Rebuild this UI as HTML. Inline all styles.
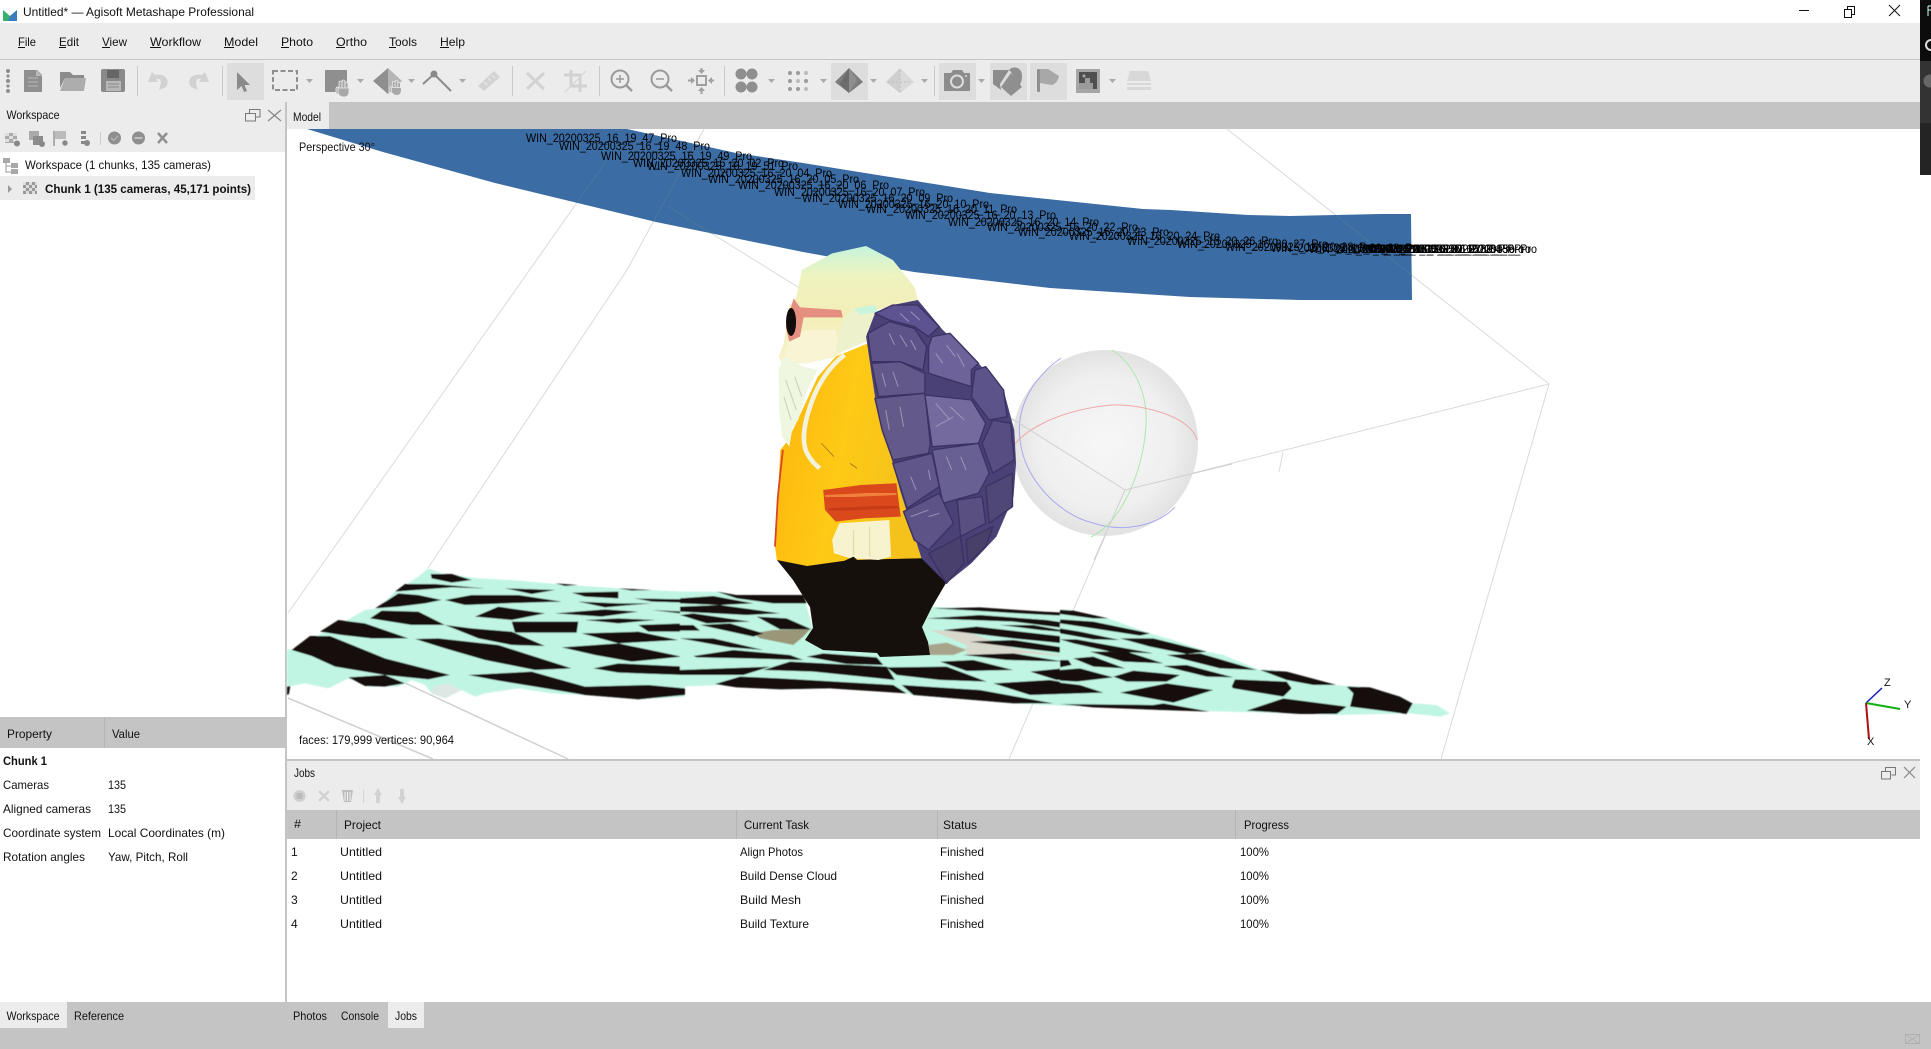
<!DOCTYPE html>
<html><head><meta charset="utf-8"><title>Untitled* — Agisoft Metashape Professional</title>
<style>
html,body{margin:0;padding:0;background:#fff;width:1931px;height:1049px;overflow:hidden}
svg{display:block}
text{font-family:"Liberation Sans",sans-serif;font-size:12px;fill:#111}
.b{font-weight:bold}
.l{font-size:11.5px;fill:#000}
</style></head><body>
<svg xmlns="http://www.w3.org/2000/svg" width="1931" height="1049" viewBox="0 0 1931 1049">
<defs>
<radialGradient id="sph" cx="50%" cy="50%" r="52%"><stop offset="0" stop-color="#f7f7f7"/><stop offset=".7" stop-color="#efefef"/><stop offset="1" stop-color="#e0e0e0"/></radialGradient>
<linearGradient id="head" x1="0" y1="0" x2="0" y2="1"><stop offset="0" stop-color="#c5f5dc"/><stop offset=".25" stop-color="#eef3c0"/><stop offset=".6" stop-color="#f4eeb8"/><stop offset="1" stop-color="#f6f2cc"/></linearGradient>
<linearGradient id="body" x1="0" y1="0" x2="1" y2=".3"><stop offset="0" stop-color="#ffb30c"/><stop offset=".55" stop-color="#fdca16"/><stop offset="1" stop-color="#f5c21c"/></linearGradient>
<clipPath id="band"><polygon points="307,129 627,129 736,153 803,163 990,193 1143,209 1171,210 1248,215 1290,216 1380,214 1411,214 1412,300 1300,300 1190,297 1050,288 914,272 803,252 656,222 495,183 383,152"/></clipPath>
<filter id="soft" x="-5%" y="-5%" width="110%" height="110%"><feGaussianBlur stdDeviation=".7"/></filter>
<filter id="soft2" x="-5%" y="-5%" width="110%" height="110%"><feGaussianBlur stdDeviation=".45"/></filter>
<symbol id="hand" viewBox="0 0 16 18" overflow="visible"><g fill="#a8a8a8" stroke="#ececec" stroke-width=".8"><rect x="1" y="8" width="3" height="7" rx="1.5"/><rect x="4" y="2" width="3" height="10" rx="1.5"/><rect x="7" y="1" width="3" height="10" rx="1.5"/><rect x="10" y="3" width="3" height="10" rx="1.5"/><path d="M3,9H14V13C14,16 12,18 9,18C6,18 4,17 3,14Z"/></g></symbol>
</defs>

<!-- chrome -->
<rect width="1931" height="1049" fill="#fff"/>
<rect x="0" y="23" width="1920" height="79" fill="#ececec"/>
<rect x="0" y="59" width="1920" height="1" fill="#c4c4c4"/>
<rect x="0" y="102" width="285" height="50" fill="#ececec"/>
<rect x="287" y="102" width="1633" height="27" fill="#c4c4c4"/>
<rect x="287" y="102" width="42" height="27" fill="#ececec"/>
<rect x="285" y="102" width="2" height="900" fill="#c4c4c4"/>

<!-- right strip -->
<rect x="1920" y="0" width="11" height="61" fill="#0c0c0c"/>
<rect x="1920" y="61" width="11" height="62" fill="#333"/>
<rect x="1920" y="123" width="11" height="52" fill="#242424"/>
<circle cx="1930" cy="81" r="6.5" fill="#666"/>
<circle cx="1931" cy="45" r="5" fill="none" stroke="#ddd" stroke-width="2"/>
<path d="M1928 6v10M1928 6h3M1928 10h3" stroke="#cfe" stroke-width="1" fill="none"/>

<!-- title bar -->
<path d="M3,10L10,16L17,10V21H3Z" fill="#38b06f"/><path d="M10,16L17,10V21H8Z" fill="#3b7cc0"/>
<text x="23" y="16" textLength="231" lengthAdjust="spacingAndGlyphs">Untitled* — Agisoft Metashape Professional</text>
<path d="M1799,10.5H1809" stroke="#111" stroke-width="1"/>
<path d="M1844.500,9.500h7v8h-7zM1847.500,9V6.500h7v8h-3" fill="none" stroke="#111" stroke-width="1"/>
<path d="M1889,5L1900,16M1900,5L1889,16" stroke="#111" stroke-width="1"/>

<!-- menu -->
<g>
<text x="18" y="46" textLength="18" lengthAdjust="spacingAndGlyphs">File</text>
<text x="59" y="46" textLength="20" lengthAdjust="spacingAndGlyphs">Edit</text>
<text x="102" y="46" textLength="25" lengthAdjust="spacingAndGlyphs">View</text>
<text x="150" y="46" textLength="51" lengthAdjust="spacingAndGlyphs">Workflow</text>
<text x="224" y="46" textLength="34" lengthAdjust="spacingAndGlyphs">Model</text>
<text x="281" y="46" textLength="32" lengthAdjust="spacingAndGlyphs">Photo</text>
<text x="336" y="46" textLength="31" lengthAdjust="spacingAndGlyphs">Ortho</text>
<text x="389" y="46" textLength="28" lengthAdjust="spacingAndGlyphs">Tools</text>
<text x="440" y="46" textLength="25" lengthAdjust="spacingAndGlyphs">Help</text>
<g fill="#111"><rect x="18" y="47" width="7" height="1"/><rect x="59" y="47" width="7" height="1"/><rect x="102" y="47" width="8" height="1"/><rect x="150" y="47" width="11" height="1"/><rect x="224" y="47" width="10" height="1"/><rect x="281" y="47" width="8" height="1"/><rect x="336" y="47" width="9" height="1"/><rect x="389" y="47" width="7" height="1"/><rect x="440" y="47" width="9" height="1"/></g>
</g>

<!-- toolbar -->
<g fill="#8f8f8f">
<circle cx="8" cy="71" r="2"/><circle cx="8" cy="76" r="1.600"/><circle cx="8" cy="81" r="2"/><circle cx="8" cy="86" r="1.600"/><circle cx="8" cy="91" r="2"/>
</g>
<g fill="#c8c8c8"><rect x="137" y="66" width="1" height="30"/><rect x="222" y="66" width="1" height="30"/><rect x="512" y="66" width="1" height="30"/><rect x="599" y="66" width="1" height="30"/><rect x="724" y="66" width="1" height="30"/><rect x="934" y="66" width="1" height="30"/></g>
<g fill="#dddddd"><rect x="227" y="63" width="37" height="37"/><rect x="831" y="63" width="37" height="37"/><rect x="939" y="63" width="37" height="37"/><rect x="990" y="63" width="37" height="37"/><rect x="1030" y="63" width="37" height="37"/></g>
<!-- new -->
<path d="M24,70H37L42,75V92H24Z" fill="#8f8f8f"/><path d="M36,70V76H42" fill="#bbb"/><path d="M28,78H38M28,82H38M28,86H38" stroke="#b8b8b8"/>
<!-- open -->
<path d="M60,72H70L73,75H84V78H65L60,88Z" fill="#8c8c8c"/><path d="M60,91L65,78H86L84,91Z" fill="#adadad"/>
<!-- save -->
<rect x="101" y="69" width="24" height="23" rx="2" fill="#8a8a8a"/><rect x="107" y="70" width="12" height="8" fill="#666"/><rect x="106" y="81" width="15" height="10" fill="#b8b8b8"/><path d="M108,84H119M108,87H119" stroke="#888"/>
<!-- undo redo -->
<path d="M166,87C171,79 164,73 155,75L152,72L148,82L158,82L156,79C160,78 163,80 159,90Z" fill="#d2d2d2"/>
<path d="M191,87C186,79 193,73 202,75L205,72L209,82L199,82L201,79C197,78 194,80 198,90Z" fill="#d2d2d2"/>
<!-- arrow -->
<path d="M237,72L250,85L244.500,85L247,91L244,92L241.500,86L237,90Z" fill="#8a8a8a"/>
<!-- select rect -->
<rect x="273" y="71" width="24" height="19" fill="none" stroke="#8f8f8f" stroke-width="2" stroke-dasharray="5 2.500"/>
<!-- dropdowns -->
<g fill="#aaaaaa"><path d="M306,79h7l-3.500,4z"/><path d="M357,79h7l-3.500,4z"/><path d="M408,79h7l-3.500,4z"/><path d="M459,79h7l-3.500,4z"/><path d="M768,79h7l-3.500,4z"/><path d="M820,79h7l-3.500,4z"/><path d="M870,79h7l-3.500,4z"/><path d="M921,79h7l-3.500,4z"/><path d="M978,79h7l-3.500,4z"/><path d="M1109,79h7l-3.500,4z"/></g>
<!-- hand square -->
<rect x="325" y="70" width="22" height="22" fill="#8f8f8f"/><use href="#hand" x="335" y="79" width="16" height="18"/>
<!-- diamond hand -->
<path d="M373,81L388,68V94Z" fill="#8f8f8f"/><path d="M388,68L402,81L388,94Z" fill="#b5b5b5"/><use href="#hand" x="389" y="79" width="14" height="17"/>
<!-- ruler point -->
<path d="M423,84L434,74L451,91" fill="none" stroke="#8a8a8a" stroke-width="2"/><circle cx="434" cy="74" r="3.500" fill="#8a8a8a"/>
<!-- ruler -->
<path d="M478,86L494,71L500,77L484,91Z" fill="#d2d2d2"/>
<path d="M484,82l3,3M488,78l3,3M492,75l3,3" stroke="#ececec"/>
<!-- X -->
<path d="M527,73L544,89M544,73L527,89" stroke="#d2d2d2" stroke-width="3"/>
<!-- crop -->
<path d="M571,70V86H587M564,75H580V92" fill="none" stroke="#d2d2d2" stroke-width="3"/><path d="M565,92L586,71" stroke="#d2d2d2"/>
<!-- zoom in/out -->
<circle cx="620" cy="79" r="8.500" fill="none" stroke="#9a9a9a" stroke-width="2"/><path d="M626,85L632,91" stroke="#9a9a9a" stroke-width="2.500"/><path d="M616,79h8M620,75v8" stroke="#9a9a9a" stroke-width="1.500"/>
<circle cx="660" cy="79" r="8.500" fill="none" stroke="#9a9a9a" stroke-width="2"/><path d="M666,85L672,91" stroke="#9a9a9a" stroke-width="2.500"/><path d="M656,79h8" stroke="#9a9a9a" stroke-width="1.500"/>
<!-- move -->
<rect x="697" y="76" width="9" height="9" fill="none" stroke="#a0a0a0" stroke-width="2"/>
<g fill="#a0a0a0"><path d="M701.500,74L698,70h2.500v-2h2v2h2.500z"/><path d="M701.500,87L698,91h2.500v3h2v-3h2.500z"/><path d="M695,80.500L691,77v2.500h-3v2h3v2.500z"/><path d="M708,80.500L712,77v2.500h2v2h-2v2.500z"/></g>
<!-- 4 dots -->
<g fill="#8f8f8f"><circle cx="741" cy="74" r="5.500"/><circle cx="752" cy="74" r="5.500"/><circle cx="741" cy="87" r="5.500"/><circle cx="752" cy="87" r="5.500"/></g>
<!-- small dots -->
<g fill="#9a9a9a"><circle cx="790" cy="73" r="2"/><circle cx="798" cy="73" r="2"/><circle cx="806" cy="73" r="2" fill="#bbb"/><circle cx="790" cy="81" r="2"/><circle cx="798" cy="81" r="2" fill="#bbb"/><circle cx="806" cy="81" r="2"/><circle cx="790" cy="89" r="2"/><circle cx="798" cy="89" r="2"/><circle cx="806" cy="89" r="2" fill="#bbb"/></g>
<!-- pyramids -->
<path d="M849,68L863,82L849,93L835,82Z" fill="#7d7d7d"/><path d="M849,68L840,84L849,93Z" fill="#6c6c6c"/><path d="M849,68L857,80L849,93Z" fill="#8e8e8e"/>
<path d="M900,68L914,82L900,93L886,82Z" fill="#cfcfcf"/><path d="M900,68L900,93L914,82Z" fill="#dadada"/><path d="M888,82H912M900,70V92" stroke="#bdbdbd" stroke-dasharray="2 2"/>
<!-- camera -->
<path d="M944,73H951L953,70H962L964,73H970V91H944Z" fill="#8c8c8c"/><circle cx="957" cy="81.500" r="6" fill="none" stroke="#ddd" stroke-width="2"/><circle cx="966" cy="76" r="1" fill="#ddd"/>
<!-- heart map -->
<path d="M993,70H1009L1000,84L1001,90L993,84Z" fill="#8c8c8c"/><path d="M1001,87L1011,73L1022,87L1011,96Z" fill="#8f8f8f"/><path d="M1009,70C1012,66 1022,66 1022,76C1022,80 1021,83 1019,86L1011,72Z" fill="#8f8f8f"/>
<!-- flag -->
<rect x="1037" y="69" width="3" height="23" rx="1" fill="#8f8f8f"/><path d="M1040,69H1048L1059,76C1058,80 1056,84 1052,85L1040,83Z" fill="#a8a8a8"/>
<!-- image -->
<rect x="1076" y="69" width="24" height="24" fill="#a6a6a6"/><rect x="1079" y="72" width="18" height="17" fill="#4f4f4f"/><path d="M1079,89V83H1085V78H1090V83H1093V89Z" fill="#9b9b9b"/><circle cx="1084" cy="76" r="1.500" fill="#aaa"/>
<!-- stack -->
<path d="M1130,71H1148L1151,81H1127Z" fill="#d8d8d8"/><path d="M1127,83H1151V85H1127Z" fill="#d8d8d8"/><path d="M1127,87H1151L1151,90H1127Z" fill="#d8d8d8"/>

<!-- workspace panel -->
<text x="6.500" y="119" textLength="53" lengthAdjust="spacingAndGlyphs">Workspace</text>
<path d="M245.500,113.500h10v7.500h-10z M249.500,113V109.500h10.500v7.500h-4" fill="none" stroke="#777"/>
<path d="M268,110L281,121M281,110L268,121" stroke="#888" stroke-width="1.200"/>
<!-- ws icons -->
<g>
<rect x="5" y="133" width="12" height="10" fill="#aaa"/><path d="M5,133h4v3h-4zM9,136h4v3h-4zM13,133h4v3h-4zM5,139h4v3h-4zM13,139h4v3h-4z" fill="#dedede"/><circle cx="17" cy="143.500" r="3" fill="#888"/>
<rect x="29" y="131" width="10" height="9" fill="#aaa"/><rect x="33" y="136" width="10" height="9" fill="#8c8c8c"/><circle cx="42" cy="144" r="3" fill="#888"/>
<path d="M54,131V146" stroke="#999" stroke-width="1.500"/><path d="M55,131H66V139H55Z" fill="#bbb"/><circle cx="65" cy="143" r="2.700" fill="#888"/>
<path d="M81,131h5v3h-5zM81,136h5v3h-5zM81,141h5v3h-5z" fill="#888"/><circle cx="87" cy="143" r="3" fill="#888"/>
<rect x="100" y="132" width="1" height="13" fill="#ccc"/>
<circle cx="114.500" cy="138" r="6.500" fill="#8f8f8f"/><path d="M111,138l2.500,2.500L118,136" stroke="#bbb" fill="none"/>
<circle cx="138.500" cy="138" r="6.500" fill="#8f8f8f"/><rect x="134.500" y="137" width="8" height="2" fill="#c0c0c0"/>
<path d="M158,133L167,143M167,133L158,143" stroke="#8f8f8f" stroke-width="2.500"/>
</g>
<!-- tree -->
<g fill="#a8a8a8"><rect x="3" y="158" width="7" height="5"/><rect x="11" y="163" width="7" height="5"/><rect x="11" y="169" width="7" height="5"/></g><path d="M6,163V172H11M6,166H11" stroke="#999" fill="none"/>
<text x="25" y="169" textLength="186" lengthAdjust="spacingAndGlyphs">Workspace (1 chunks, 135 cameras)</text>
<rect x="0" y="176" width="255" height="24" fill="#ececec"/>
<path d="M8,185L12,189L8,193Z" fill="#999"/>
<rect x="23" y="182" width="14" height="12" fill="#999"/>
<path d="M23,182h3v3h-3zM29,182h3v3h-3zM35,182h2v3h-2zM26,185h3v3h-3zM32,185h3v3h-3zM23,188h3v3h-3zM29,188h3v3h-3zM35,188h2v3h-2zM26,191h3v3h-3zM32,191h3v3h-3z" fill="#ddd"/>
<text x="45" y="193" textLength="206" lengthAdjust="spacingAndGlyphs" class="b">Chunk 1 (135 cameras, 45,171 points)</text>

<!-- viewport wire lines -->
<g fill="none" stroke="#dadada" stroke-width="1">
<path d="M1227,129L1549,384L1441,759"/>
<path d="M1549,384L1125,490L1009,759"/>
<path d="M669,207L1125,490"/>
<path d="M607,160L288,613"/>
<path d="M704,129L627,270L428,568"/>
<path d="M1283,452L1279,472"/>
</g>
<path d="M288,698L433,759M405,683L568,759" stroke="#d0d0d0" stroke-width="1.500" fill="none"/>

<!-- blue band -->
<polygon points="307,129 627,129 736,153 803,163 990,193 1143,209 1171,210 1248,215 1290,216 1380,214 1411,214 1412,300 1300,300 1190,297 1050,288 914,272 803,252 656,222 495,183 383,152" fill="#3b6ca3"/>
<g fill="none" stroke="#4c769f" stroke-width="1" clip-path="url(#band)"><path d="M607,160L288,613M704,129L627,270M669,207L1125,490M1227,129L1549,384"/></g>

<!-- labels -->
<g class="lab">
<text class="l" x="526" y="142" textLength="151" lengthAdjust="spacingAndGlyphs">WIN_20200325_16_19_47_Pro</text>
<text class="l" x="559" y="150" textLength="151" lengthAdjust="spacingAndGlyphs">WIN_20200325_16_19_48_Pro</text>
<text class="l" x="601" y="160" textLength="151" lengthAdjust="spacingAndGlyphs">WIN_20200325_16_19_49_Pro</text>
<text class="l" x="633" y="167" textLength="151" lengthAdjust="spacingAndGlyphs">WIN_20200325_16_20_02_Pro</text>
<text class="l" x="647" y="170" textLength="151" lengthAdjust="spacingAndGlyphs">WIN_20200325_16_19_51_Pro</text>
<text class="l" x="681" y="177" textLength="151" lengthAdjust="spacingAndGlyphs">WIN_20200325_16_20_04_Pro</text>
<text class="l" x="708" y="183" textLength="151" lengthAdjust="spacingAndGlyphs">WIN_20200325_16_20_05_Pro</text>
<text class="l" x="738" y="189" textLength="151" lengthAdjust="spacingAndGlyphs">WIN_20200325_16_20_06_Pro</text>
<text class="l" x="774" y="196" textLength="151" lengthAdjust="spacingAndGlyphs">WIN_20200325_16_20_07_Pro</text>
<text class="l" x="802" y="202" textLength="151" lengthAdjust="spacingAndGlyphs">WIN_20200325_16_20_09_Pro</text>
<text class="l" x="838" y="208" textLength="151" lengthAdjust="spacingAndGlyphs">WIN_20200325_16_20_10_Pro</text>
<text class="l" x="866" y="213" textLength="151" lengthAdjust="spacingAndGlyphs">WIN_20200325_16_20_11_Pro</text>
<text class="l" x="905" y="219" textLength="151" lengthAdjust="spacingAndGlyphs">WIN_20200325_16_20_13_Pro</text>
<text class="l" x="948" y="226" textLength="151" lengthAdjust="spacingAndGlyphs">WIN_20200325_16_20_14_Pro</text>
<text class="l" x="987" y="231" textLength="151" lengthAdjust="spacingAndGlyphs">WIN_20200325_16_20_22_Pro</text>
<text class="l" x="1018" y="236" textLength="151" lengthAdjust="spacingAndGlyphs">WIN_20200325_16_20_23_Pro</text>
<text class="l" x="1069" y="240" textLength="151" lengthAdjust="spacingAndGlyphs">WIN_20200325_16_20_24_Pro</text>
<text class="l" x="1127" y="245" textLength="151" lengthAdjust="spacingAndGlyphs">WIN_20200325_16_20_26_Pro</text>
<text class="l" x="1177" y="248" textLength="151" lengthAdjust="spacingAndGlyphs">WIN_20200325_16_20_27_Pro</text>
<text class="l" x="1225" y="251" textLength="151" lengthAdjust="spacingAndGlyphs">WIN_20200325_16_20_28_Pro</text>
<text class="l" x="1271" y="252" textLength="151" lengthAdjust="spacingAndGlyphs">WIN_20200325_16_20_29_Pro</text>
<text class="l" x="1309" y="253" textLength="151" lengthAdjust="spacingAndGlyphs">WIN_20200325_16_20_30_Pro</text>
<text class="l" x="1335" y="253" textLength="151" lengthAdjust="spacingAndGlyphs">WIN_20200325_16_20_31_Pro</text>
<text class="l" x="1352" y="253" textLength="151" lengthAdjust="spacingAndGlyphs">WIN_20200325_16_20_32_Pro</text>
<text class="l" x="1364" y="253" textLength="151" lengthAdjust="spacingAndGlyphs">WIN_20200325_16_20_33_Pro</text>
<text class="l" x="1373" y="253" textLength="151" lengthAdjust="spacingAndGlyphs">WIN_20200325_16_20_34_Pro</text>
<text class="l" x="1380" y="253" textLength="151" lengthAdjust="spacingAndGlyphs">WIN_20200325_16_20_35_Pro</text>
<text class="l" x="1386" y="253" textLength="151" lengthAdjust="spacingAndGlyphs">WIN_20200325_16_20_36_Pro</text>
</g>

<!-- sphere -->
<circle cx="1105" cy="443" r="93" fill="url(#sph)"/>
<g fill="none" stroke-width="1">
<path d="M1061,358C1030,380 1016,410 1020,440C1024,480 1060,515 1093,523C1120,532 1155,528 1175,507" stroke="#a9a9ee"/>
<path d="M1112,350C1135,365 1148,395 1146,425C1144,465 1125,520 1091,537" stroke="#aae8aa"/>
<path d="M1009,453C1020,430 1060,410 1111,405C1140,404 1190,415 1197,440" stroke="#ecaaaa"/>
</g>
<path d="M1011,418L1125,490L1232,464M1125,490L1094,560" stroke="#cfcfcf" fill="none"/>

<!-- floor -->
<g filter="url(#soft2)">
<g transform="translate(285,560) scale(.33333)">
<path d="M6,270L20,268L100,225L190,178L240,150L280,145L330,95L400,50L430,25L470,40L580,55L680,60L810,72L1000,85L1200,95L1200,410L1060,418L900,405L800,400L700,385L600,400L570,410L530,390L480,415L440,400L420,375L380,360L340,380L250,380L190,355L130,385L60,370L10,380L6,405Z" fill="#c1f5e3"/>
<path d="M440,400L445,380L490,370L530,390L480,415Z" fill="#dde8e4"/>
<g fill="#16100c">
<polygon points="6,380 16,378 12,402 6,405"/>
<polygon points="20,270 75,228 135,228 300,295 495,345 430,358 300,345 150,320 80,288"/>
<polygon points="105,215 160,180 240,190 370,235 260,235 170,225"/>
<polygon points="255,175 290,152 400,155 480,195 380,195"/>
<polygon points="270,145 340,100 400,105 470,120 420,130 340,140"/>
<polygon points="330,95 360,72 450,72 600,85 500,82 420,88"/>
<polygon points="437,42 500,42 560,60 500,68 440,55"/>
<polygon points="390,237 460,235 640,255 860,325 750,330 600,300 480,265"/>
<polygon points="480,195 560,205 680,215 780,258 680,255 580,235"/>
<polygon points="570,170 640,140 780,160 680,180"/>
<polygon points="480,120 560,105 700,105 830,125 660,130 540,135"/>
<polygon points="680,185 880,185 875,218 690,218"/>
<polygon points="890,220 1060,215 1180,240 1000,250"/>
<polygon points="830,262 1000,250 1190,290 1040,305 930,285"/>
<polygon points="925,325 1000,310 1200,320 1200,345 1000,338"/>
<polygon points="550,345 740,335 900,380 1090,375 1200,385 1200,405 1060,418 900,405 750,380 640,362"/>
<polygon points="190,352 300,345 360,370 300,380 240,378"/>
<polygon points="810,160 960,148 1060,155 950,170"/>
<polygon points="900,180 1000,175 1110,180 1000,190"/>
<polygon points="1060,195 1200,190 1200,215 1090,215"/>
<polygon points="880,125 1000,130 1100,130 960,142"/>
<polygon points="660,85 810,90 740,102"/>
<polygon points="860,98 1000,95 1000,115 900,110"/>
<polygon points="1050,115 1200,118 1200,128 1100,125"/>
<polygon points="810,70 880,75 840,78"/>
<polygon points="1000,85 1100,90 1040,92"/>
<polygon points="1100,150 1200,155 1200,162"/>
</g>
</g>
<g transform="translate(680,570) scale(.33333)">
<path d="M0,65L110,65L170,75L370,75L400,180L755,110L1200,130L1200,410L1000,400L700,375L640,360L450,355L300,358L120,345L0,350Z" fill="#c1f5e3"/>
<path d="M750,180L860,185L1000,235L1170,260L1030,250L980,262L860,255L860,225Z" fill="#d8d8cc"/>
<path d="M220,190L280,180L390,178L370,200L340,225L240,205Z" fill="#9a9678"/>
<path d="M745,225L800,218L860,240L820,255L745,255Z" fill="#a8a48c"/>
<g fill="#16100c">
<polygon points="110,65 170,75 370,75 380,100 280,100 170,85"/>
<polygon points="0,85 100,78 220,100 120,105 0,100"/>
<polygon points="0,110 120,105 300,130 200,135 0,125"/>
<polygon points="0,135 40,130 210,155 80,160"/>
<polygon points="230,140 320,145 395,178 300,178"/>
<polygon points="60,165 150,160 250,190 220,200"/>
<polygon points="0,165 40,165 60,182 0,182"/>
<polygon points="0,205 100,205 250,240 150,232"/>
<polygon points="40,258 160,240 330,255 370,270 200,265 50,262"/>
<polygon points="380,260 430,250 590,262 610,285 500,282"/>
<polygon points="250,300 330,275 620,290 645,330 400,305"/>
<polygon points="105,342 180,320 300,325 640,345 680,370 450,355 300,358 170,352"/>
<polygon points="0,300 270,290 190,315 0,315"/>
<polygon points="665,345 900,360 1120,400 1000,400 700,375"/>
<polygon points="620,292 800,290 920,335 780,330 650,315"/>
<polygon points="780,275 880,270 1000,300 860,303"/>
<polygon points="940,340 1110,330 1200,345 1200,370 1050,375"/>
<polygon points="1050,305 1200,290 1200,330 1130,330"/>
<polygon points="850,255 1000,250 1150,275 980,270"/>
<polygon points="760,115 900,112 1090,125 1200,130 1200,140 1050,132 880,122"/>
<polygon points="740,145 900,135 1100,150 1200,165 1200,180 1000,155"/>
<polygon points="790,180 890,170 1200,205 1200,225 1000,205"/>
<polygon points="870,215 1000,210 1200,240 1200,255 1030,235"/>
<polygon points="960,165 1060,165 1200,190 1080,180"/>
</g>
</g>
<g transform="translate(1060,590) scale(.33333)">
<path d="M0,60L30,60L145,85L200,105L270,130L340,150L440,185L490,195L600,240L640,240L820,285L900,290L1020,320L1060,340L1130,345L1170,370L1140,380L1050,370L830,375L720,370L500,365L300,360L0,345Z" fill="#c1f5e3"/>
<g fill="#16100c">
<polygon points="0,60 40,62 145,85 100,85 0,72"/>
<polygon points="0,88 100,95 270,130 240,137 100,115 0,100"/>
<polygon points="0,115 60,125 180,150 100,148 0,130"/>
<polygon points="180,145 280,145 440,185 380,192 270,170"/>
<polygon points="0,148 50,148 280,190 150,185 40,160"/>
<polygon points="90,185 200,185 310,220 190,215"/>
<polygon points="320,195 420,190 590,240 480,235"/>
<polygon points="40,205 100,200 195,235 100,230"/>
<polygon points="0,210 25,210 35,225 0,232"/>
<polygon points="310,228 380,225 520,262 440,260"/>
<polygon points="160,260 220,242 360,255 320,275 200,275"/>
<polygon points="0,240 60,235 160,262 50,275 0,272"/>
<polygon points="600,240 680,245 830,285 760,285 680,270"/>
<polygon points="515,290 525,268 680,275 695,295 670,320 520,295"/>
<polygon points="180,308 320,280 460,300 340,338"/>
<polygon points="0,278 60,285 130,308 0,312"/>
<polygon points="860,290 930,292 1020,320 1058,340 1040,372 950,360 870,350 880,310"/>
<polygon points="560,362 670,325 860,350 830,372 720,372"/>
<polygon points="0,342 280,345 310,340 450,365 300,360 100,352"/>
</g>
</g>
</g>

<!-- base (real coords) -->
<polygon points="777,560 793,580 810,607 813,628 805,640 823,650 877,653 880,657 930,655 928,642 922,627 932,607 946,583 967,566 921,558 850,560" fill="#15100b"/>

<!-- figure -->
<g transform="translate(700,230) scale(.3571,.3333)">
<!-- body -->
<path d="M240,640L260,600L330,440L380,380L470,340L490,500L560,780L620,985L420,990L300,1008L215,990L210,950L218,800L225,660Z" fill="url(#body)"/>
<path d="M232,660L218,800L210,950" stroke="#d84526" stroke-width="5" fill="none"/>
<!-- belt -->
<path d="M345,780L450,765L550,760L562,860L460,865L380,875L350,840Z" fill="#da4a1e" filter="url(#soft)"/>
<path d="M350,800L550,790" stroke="#f0803a" stroke-width="10" fill="none" filter="url(#soft)"/>
<path d="M360,840L555,830" stroke="#c63a18" stroke-width="10" fill="none" filter="url(#soft)"/>
<!-- robe front -->
<path d="M370,930L390,880L530,870L535,980L500,990L420,985L375,970Z" fill="#f8f3cf"/>
<path d="M430,900V975M475,890V980" stroke="#e4dcaf" stroke-width="4" fill="none"/>
<!-- black fringe under robe -->
<path d="M405,992L430,980L450,1000L500,990L530,1000L470,1040L430,1040Z" fill="#15100b"/>
<!-- head -->
<path d="M465,48L540,90L600,170L612,215L490,240L430,340L380,380L300,400L230,400L220,380L235,340L250,230L270,200L285,120L370,70Z" fill="url(#head)"/>
<path d="M250,320L300,300L380,300L390,340L375,380L300,400L235,390Z" fill="#f8f4d4" filter="url(#soft)"/>
<!-- ear -->
<path d="M380,360L400,270L430,235L490,225L500,250L470,300L465,335L400,365Z" fill="#eef2cc" filter="url(#soft2)"/>
<path d="M430,235L490,225L500,245L450,255Z" fill="#c9f5dc"/>
<!-- beard -->
<path d="M220,420L235,380L290,410L330,420L300,480L275,570L260,590L250,650L230,620L222,540Z" fill="#eff7e0"/>
<path d="M240,450L270,540M265,440L285,500M235,500L255,570" stroke="#c8d2b8" stroke-width="3" fill="none"/>
<!-- glasses -->
<path d="M262,205L240,290L250,335L280,320L290,262L400,262L395,240L280,232Z" fill="#e48f80" filter="url(#soft2)"/>
<ellipse cx="255" cy="276" rx="14" ry="42" fill="#120c0a"/>
<!-- rope -->
<path d="M405,375C360,410 325,470 305,540C290,590 285,640 300,670C312,695 325,705 335,715" fill="none" stroke="#f3f2dc" stroke-width="13"/>
<path d="M340,640L375,680M420,700L440,715" stroke="#8c6a16" stroke-width="2" fill="none"/>
<!-- shell -->
<path d="M490,250L540,225L610,210L680,300L780,400L850,480L880,600L885,700L878,800L830,920L760,1000L690,1060L620,985L560,780L490,500L465,320Z" fill="#4a4176"/>
<g stroke="#3a3264" stroke-width="4" stroke-linejoin="round" filter="url(#soft)">
<polygon fill="#5c5290" points="490,250 540,225 610,225 670,290 640,320 600,290 530,270"/>
<polygon fill="#5d5288" points="470,310 530,275 600,295 635,350 625,420 560,395 480,395"/>
<polygon fill="#625889" points="480,400 560,395 630,430 630,490 500,500"/>
<polygon fill="#645a89" points="490,505 630,490 645,640 640,670 540,690 510,600"/>
<polygon fill="#6d639a" points="650,320 700,310 780,400 760,420 760,470 640,430 640,350"/>
<polygon fill="#756b9e" points="630,495 760,510 800,580 780,640 650,650"/>
<polygon fill="#5d538b" points="770,420 800,410 850,480 860,560 810,570 760,500"/>
<polygon fill="#584e83" points="790,640 820,570 870,580 880,690 820,730"/>
<polygon fill="#685e92" points="650,660 780,640 810,730 780,790 680,820"/>
<polygon fill="#61578a" points="540,700 650,670 670,770 580,835"/>
<polygon fill="#5d5386" points="570,845 670,790 710,880 640,960 600,930"/>
<polygon fill="#5a5081" points="720,810 790,800 800,880 730,920"/>
<polygon fill="#504775" points="800,770 875,730 875,830 810,880"/>
<polygon fill="#483f6d" points="640,970 730,920 740,1000 690,1060"/>
<polygon fill="#483f69" points="745,930 820,890 800,950 750,1000"/>
</g>
<g stroke="#a6a0c0" stroke-width="3" fill="none" opacity=".8">
<path d="M560,250l25,25M590,245l25,25M530,310l15,35M560,315l20,35M590,330l15,30M510,430l10,40M540,425l15,45M660,370l20,30M690,345l25,35M720,370l20,40M660,520l40,50M700,530l40,40M660,590l50,-30M520,540l10,60M560,530l10,60M690,680l15,40M730,680l15,40M590,740l15,40M640,720l5,30M590,860l50,-20M640,860l30,-10"/>
</g>
</g>

<!-- overlay text -->
<text x="299" y="151" textLength="76" lengthAdjust="spacingAndGlyphs">Perspective 30°</text>
<text x="299" y="744" textLength="155" lengthAdjust="spacingAndGlyphs">faces: 179,999 vertices: 90,964</text>

<!-- axis -->
<path d="M1866,703L1882,688" stroke="#1616c0" stroke-width="1.500"/>
<path d="M1866,703L1900,709" stroke="#10b010" stroke-width="2"/>
<path d="M1866,703L1869,739" stroke="#b01010" stroke-width="2"/>
<text x="1884" y="686" style="font-size:11px">Z</text>
<text x="1904" y="708" style="font-size:11px">Y</text>
<text x="1867" y="745" style="font-size:11px">X</text>
<text x="293" y="121" textLength="28" lengthAdjust="spacingAndGlyphs">Model</text>

<!-- property panel -->
<rect x="0" y="717" width="285" height="31" fill="#c4c4c4"/>
<rect x="104" y="718" width="1" height="30" fill="#b4b4b4"/>
<text x="7" y="738" textLength="45" lengthAdjust="spacingAndGlyphs">Property</text>
<text x="112" y="738" textLength="28" lengthAdjust="spacingAndGlyphs">Value</text>
<text x="3" y="765" textLength="44" lengthAdjust="spacingAndGlyphs" class="b">Chunk 1</text>
<text x="3" y="789" textLength="46" lengthAdjust="spacingAndGlyphs">Cameras</text>
<text x="108" y="789" textLength="18" lengthAdjust="spacingAndGlyphs">135</text>
<text x="3" y="813" textLength="88" lengthAdjust="spacingAndGlyphs">Aligned cameras</text>
<text x="108" y="813" textLength="18" lengthAdjust="spacingAndGlyphs">135</text>
<text x="3" y="837" textLength="98" lengthAdjust="spacingAndGlyphs">Coordinate system</text>
<text x="108" y="837" textLength="117" lengthAdjust="spacingAndGlyphs">Local Coordinates (m)</text>
<text x="3" y="861" textLength="82" lengthAdjust="spacingAndGlyphs">Rotation angles</text>
<text x="108" y="861" textLength="80" lengthAdjust="spacingAndGlyphs">Yaw, Pitch, Roll</text>

<!-- jobs panel -->
<rect x="287" y="759" width="1633" height="2" fill="#c4c4c4"/>
<rect x="287" y="761" width="1633" height="49" fill="#ececec"/>
<text x="294" y="777" textLength="21" lengthAdjust="spacingAndGlyphs">Jobs</text>
<path d="M1881.500,771.500h9v7.500h-9z M1885.500,771V767.500h10v7.500h-4" fill="none" stroke="#777"/>
<path d="M1904,767L1915,778M1915,767L1904,778" stroke="#888" stroke-width="1.200"/>
<circle cx="299.500" cy="796" r="6" fill="#cfcfcf"/><rect x="296.500" y="793" width="6" height="6" fill="#bbb"/>
<path d="M319,791L329,801M329,791L319,801" stroke="#d2d2d2" stroke-width="2.500"/>
<path d="M342,790H353L351,802H344Z" fill="#bdbdbd"/><path d="M345,792V801M347.500,792V801M350,792V801" stroke="#eee"/>
<rect x="363" y="790" width="1" height="13" fill="#d4d4d4"/>
<path d="M378,788L382,795H380V803H376V795H374Z" fill="#d2d2d2"/>
<path d="M402,804L406,797H404V789H400V797H398Z" fill="#d2d2d2"/>
<rect x="287" y="810" width="1633" height="29" fill="#c4c4c4"/>
<g fill="#b4b4b4"><rect x="336" y="810" width="1" height="29"/><rect x="736" y="810" width="1" height="29"/><rect x="937" y="810" width="1" height="29"/><rect x="1235" y="810" width="1" height="29"/></g>
<text x="294" y="828" textLength="7" lengthAdjust="spacingAndGlyphs">#</text>
<text x="344" y="829" textLength="37" lengthAdjust="spacingAndGlyphs">Project</text>
<text x="744" y="829" textLength="65" lengthAdjust="spacingAndGlyphs">Current Task</text>
<text x="943" y="829" textLength="34" lengthAdjust="spacingAndGlyphs">Status</text>
<text x="1244" y="829" textLength="45" lengthAdjust="spacingAndGlyphs">Progress</text>
<text x="291" y="856">1</text><text x="340" y="856" textLength="42" lengthAdjust="spacingAndGlyphs">Untitled</text><text x="740" y="856" textLength="63" lengthAdjust="spacingAndGlyphs">Align Photos</text><text x="940" y="856" textLength="44" lengthAdjust="spacingAndGlyphs">Finished</text><text x="1240" y="856" textLength="29" lengthAdjust="spacingAndGlyphs">100%</text>
<text x="291" y="880">2</text><text x="340" y="880" textLength="42" lengthAdjust="spacingAndGlyphs">Untitled</text><text x="740" y="880" textLength="97" lengthAdjust="spacingAndGlyphs">Build Dense Cloud</text><text x="940" y="880" textLength="44" lengthAdjust="spacingAndGlyphs">Finished</text><text x="1240" y="880" textLength="29" lengthAdjust="spacingAndGlyphs">100%</text>
<text x="291" y="904">3</text><text x="340" y="904" textLength="42" lengthAdjust="spacingAndGlyphs">Untitled</text><text x="740" y="904" textLength="61" lengthAdjust="spacingAndGlyphs">Build Mesh</text><text x="940" y="904" textLength="44" lengthAdjust="spacingAndGlyphs">Finished</text><text x="1240" y="904" textLength="29" lengthAdjust="spacingAndGlyphs">100%</text>
<text x="291" y="928">4</text><text x="340" y="928" textLength="42" lengthAdjust="spacingAndGlyphs">Untitled</text><text x="740" y="928" textLength="69" lengthAdjust="spacingAndGlyphs">Build Texture</text><text x="940" y="928" textLength="44" lengthAdjust="spacingAndGlyphs">Finished</text><text x="1240" y="928" textLength="29" lengthAdjust="spacingAndGlyphs">100%</text>

<!-- bottom bar -->
<rect x="0" y="1002" width="1931" height="47" fill="#c4c4c4"/>
<rect x="0" y="1002" width="67" height="26" fill="#ececec"/>
<rect x="388" y="1002" width="36" height="26" fill="#ececec"/>
<text x="6.500" y="1020" textLength="53" lengthAdjust="spacingAndGlyphs">Workspace</text>
<text x="74" y="1020" textLength="50" lengthAdjust="spacingAndGlyphs">Reference</text>
<text x="293" y="1020" textLength="34" lengthAdjust="spacingAndGlyphs">Photos</text>
<text x="341" y="1020" textLength="38" lengthAdjust="spacingAndGlyphs">Console</text>
<text x="395" y="1020" textLength="22" lengthAdjust="spacingAndGlyphs">Jobs</text>
<g fill="none" stroke="#b0b0b0"><rect x="1905.500" y="1034.500" width="14" height="9"/><path d="M1905,1044L1920,1034M1905,1034L1920,1044"/></g>
</svg>
</body></html>
